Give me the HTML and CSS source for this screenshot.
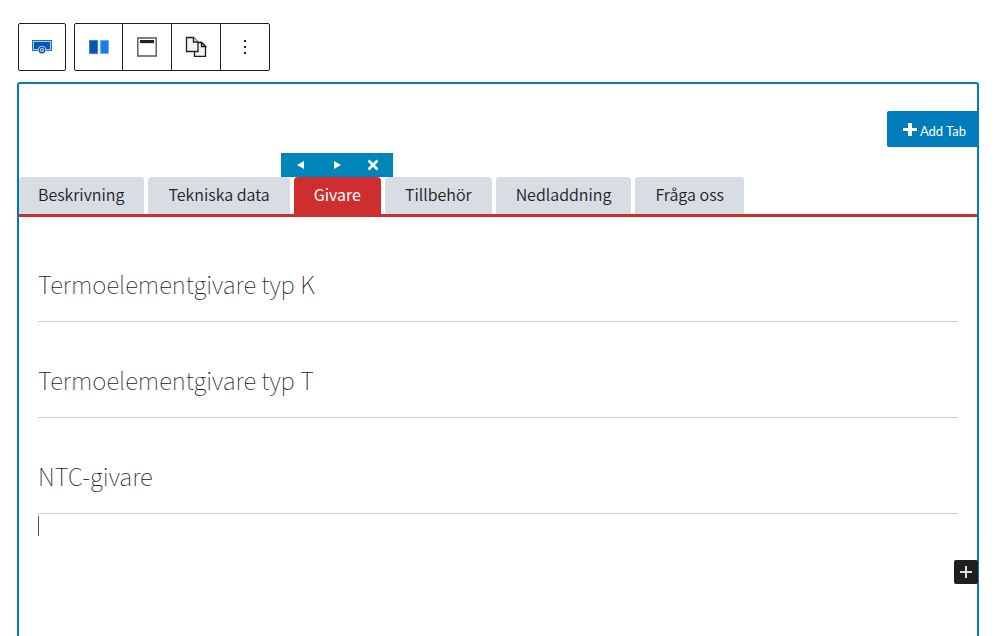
FILE: index.html
```html
<!DOCTYPE html>
<html lang="sv">
<head>
<meta charset="utf-8">
<meta name="viewport" content="width=device-width, initial-scale=1">
<title>Tabs block</title>
<link rel="stylesheet" href="styles.css">
</head>
<body>
<div class="editor">
  <div class="toolbar" role="toolbar" aria-label="Block tools">
    <div class="tool-group">
      <button class="tool" type="button" aria-label="Select parent block">
        <svg width="20" height="20" viewBox="0 0 20 20"><path fill="#2a6cc0" d="M0 3h20v11H0z"/><path fill="#a9cbf0" d="M1 4h18v9H1z"/><path fill="#0a58b5" d="M2 5h16v7H2z"/><circle cx="10" cy="13" r="4" fill="#cfe2f7"/><circle cx="10" cy="13" r="2.700" fill="#fff" stroke="#0a58b5" stroke-width="1.300"/><path stroke="#0a58b5" d="M8.500 13h3M10 11.500v3"/></svg>
      </button>
    </div>
    <div class="tool-group">
      <button class="tool" type="button" aria-label="Tabs">
        <svg width="20" height="20" viewBox="0 0 20 20"><path fill="#0a56b3" stroke="#2c70c2" stroke-width=".7" d="M.4 3.400h8.200v13.200H.4z"/><path fill="#1a7ee8" stroke="#69aaf1" stroke-width=".9" d="M11.500 3.500h8v13h-8z"/></svg>
      </button>
      <button class="tool" type="button" aria-label="Layout">
        <svg width="20" height="20" viewBox="0 0 20 20"><path fill="#fff" stroke="#555" stroke-width="1.400" d="M.8 1h18.400v18H.8z"/><path fill="#e3e3e3" d="M2 5h16v2H2z"/><path fill="#1e1e1e" d="M3 3h14v3H3z"/></svg>
      </button>
      <button class="tool" type="button" aria-label="Copy">
        <svg width="22" height="22" viewBox="0 0 22 22" fill="#f3f3f3" stroke="#1e1e1e" stroke-width="1.300"><path d="M9.500 6.500h7l4 4v9.800h-11z"/><path d="M16.500 6.500v4h4z"/><path d="M1.500 1.500h7l4.500 4.500v9.500H1.500z"/><path d="M8.500 1.500v4.500h4.500"/></svg>
      </button>
      <button class="tool" type="button" aria-label="Options">
        <svg width="20" height="20" viewBox="0 0 20 20" fill="#1e1e1e"><path d="M9 3h2v2H9zM9 9h2v2H9zM9 15h2v2H9z"/></svg>
      </button>
    </div>
  </div>

  <main class="block">
    <div class="block-actions">
      <button class="add-tab" type="button">
        <svg width="14" height="14" viewBox="0 0 14 14" aria-hidden="true"><path fill="#fff" d="M5 1h4v5h5v3H9v5H5V9H0V6h5z"/></svg>
        <span>Add Tab</span>
      </button>
    </div>

    <div class="tabs">
      <button class="tab" type="button">Beskrivning</button>
      <button class="tab" type="button">Tekniska data</button>
      <div class="tab-holder">
        <div class="tab-tools">
          <button class="tab-tool" type="button" aria-label="Move left"><svg width="12" height="12" viewBox="0 0 12 12"><path fill="#fff" d="M9 2v8L2 6z"/></svg></button>
          <button class="tab-tool" type="button" aria-label="Move right"><svg width="12" height="12" viewBox="0 0 12 12"><path fill="#fff" d="M3 2v8l7-4z"/></svg></button>
          <button class="tab-tool" type="button" aria-label="Remove"><svg width="12" height="12" viewBox="0 0 12 12"><path stroke="#fff" stroke-width="2.600" d="M1.500 1.500l9 9M10.500 1.500l-9 9"/></svg></button>
        </div>
        <button class="tab tab-active" type="button">Givare</button>
      </div>
      <button class="tab" type="button">Tillbehör</button>
      <button class="tab" type="button">Nedladdning</button>
      <button class="tab" type="button">Fråga oss</button>
    </div>

    <section class="panel">
      <h2 class="heading">Termoelementgivare typ K</h2>
      <h2 class="heading">Termoelementgivare typ T</h2>
      <h2 class="heading">NTC-givare</h2>
      <p class="empty-line"><span class="caret"></span></p>
    </section>
    <button class="inserter" type="button" aria-label="Add block">
      <svg width="12" height="12" viewBox="0 0 12 12"><path fill="#ddd" d="M5 0h2v5h5v2H7v5H5V7H0V5h5z"/></svg>
    </button>
  </main>
</div>
</body>
</html>
```
FILE: styles.css
```css
* {
  box-sizing: border-box;
}

html {
  overflow: hidden;
}

body {
  margin: 0;
  background: #fff;
  color: #222;
  font-family: "Noto Sans CJK SC", "Noto Sans", sans-serif;
}

button {
  margin: 0;
  padding: 0;
  border: 0;
  background: none;
  font: inherit;
  color: inherit;
  cursor: pointer;
}

svg {
  display: block;
}

.editor {
  display: flex;
  flex-direction: column;
  gap: 11px;
  min-height: 100vh;
  padding: 23px 28px 0 17px;
}

.toolbar {
  display: flex;
  gap: 8px;
  padding-left: 1px;
}

.tool-group {
  display: flex;
  border: 1px solid #1e1e1e;
  border-radius: 2px;
}

.tool {
  display: flex;
  align-items: center;
  justify-content: center;
  width: 47px;
  height: 46px;
}

.tool:only-child {
  width: 46px;
}

.tool + .tool {
  width: 49px;
  border-left: 1px solid #1e1e1e;
}

.block {
  flex: 1;
  border: 2px solid #007cba;
  border-bottom: 0;
  border-radius: 3px 3px 0 0;
  padding-top: 27px;
}

.block-actions {
  display: flex;
  justify-content: flex-end;
}

.add-tab {
  display: flex;
  align-items: center;
  gap: 3px;
  height: 36px;
  padding: 0 11px 0 16px;
  border-radius: 2px 0 0 2px;
  background: #007cba;
  color: #fff;
  font: 13px/20px Lato, "Noto Sans", sans-serif;
}

.add-tab span {
  padding-top: 4px;
}

.tabs {
  display: flex;
  align-items: flex-end;
  gap: 4px;
  margin-top: 30px;
  border-bottom: 3px solid #cf2e2e;
}

.tab {
  height: 37px;
  padding: 0 20px 2px;
  border-radius: 4px 4px 0 0;
  background: #d8dce3;
  font-size: 16px;
  font-weight: 350;
  line-height: 33px;
  white-space: nowrap;
}

.tab:first-child {
  padding-left: 19px;
}

.tab-active {
  display: block;
  background: #cf2e2e;
  color: #fff;
  font-weight: 400;
}

.tab-holder {
  position: relative;
}

.tab-tools {
  position: absolute;
  bottom: 100%;
  left: 50%;
  display: flex;
  width: 112px;
  height: 24px;
  margin-left: -56px;
  padding: 0 2px;
  background: #0085ba;
}

.tab-tool {
  display: flex;
  flex: 1;
  align-items: center;
  justify-content: center;
}

.panel {
  padding: 36px 19px 0;
}

.heading {
  margin: 0 0 27px;
  padding: 12px 0 18px;
  border-bottom: 1px solid #ccc;
  font-size: 24px;
  font-weight: 100;
  line-height: 38px;
}

.heading:nth-of-type(3) {
  margin-bottom: 2px;
}

.empty-line {
  margin: 0;
  height: 20px;
}

.caret {
  display: block;
  width: 1px;
  height: 20px;
  background: #555;
}

.inserter {
  display: flex;
  align-items: center;
  justify-content: center;
  width: 24px;
  height: 24px;
  margin: 24px -1px 0 auto;
  border-radius: 2px;
  background: #1e1e1e;
}
```
